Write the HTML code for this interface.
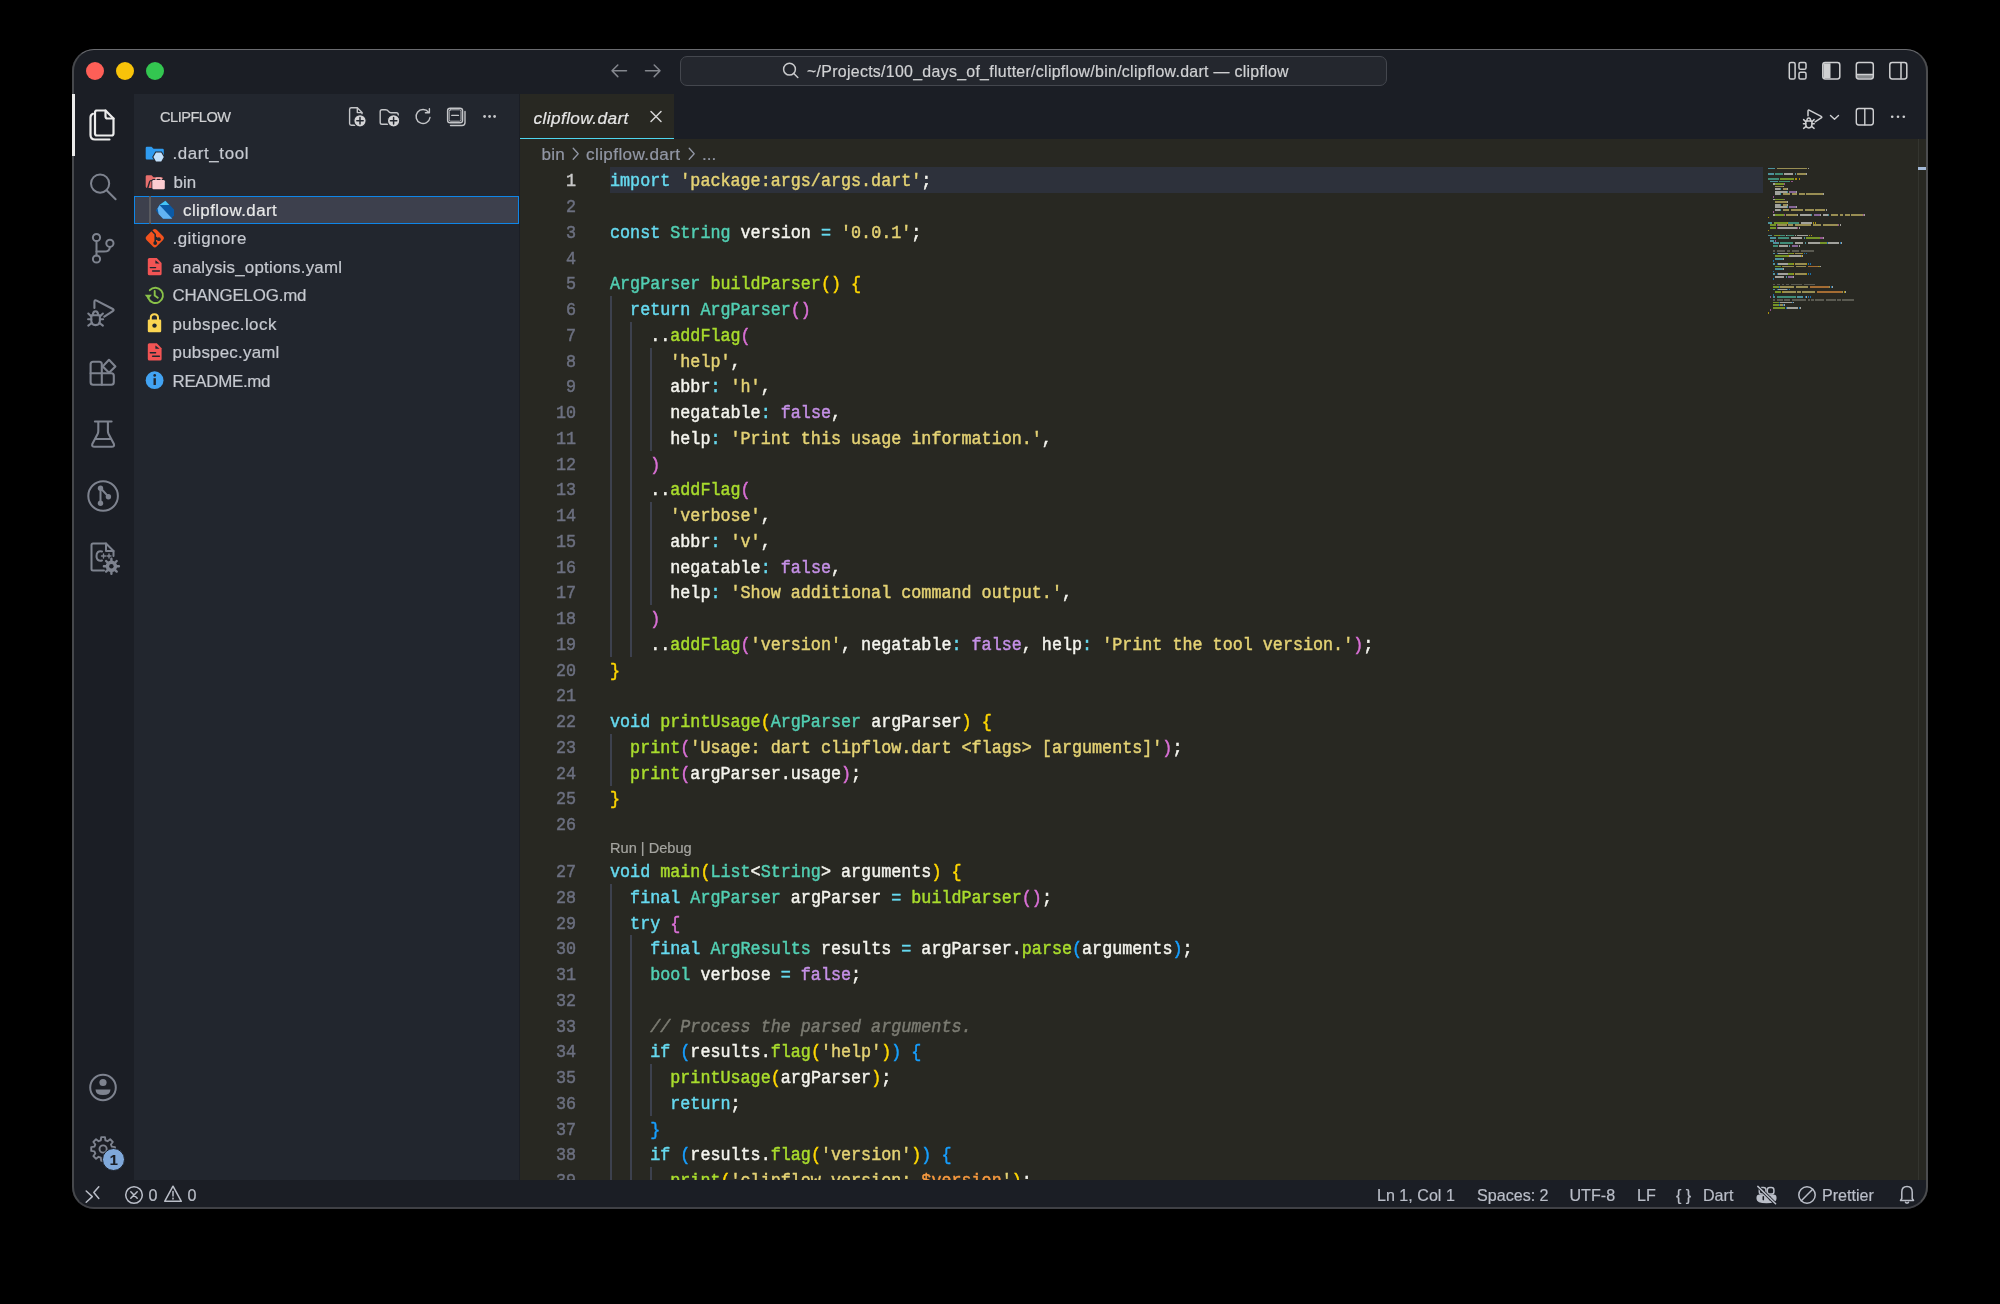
<!DOCTYPE html><html><head><meta charset="utf-8"><title>clipflow.dart</title><style>

html,body{margin:0;padding:0;background:#000;width:2000px;height:1304px;overflow:hidden}
.a{position:absolute}
#clip{position:absolute;left:0;top:0;width:2000px;height:1304px;clip-path:inset(49px 72px 95px 72px round 22px);will-change:transform}
.ui{font-family:"Liberation Sans",sans-serif;white-space:pre;-webkit-text-stroke:0.2px currentColor}
.mono{font-family:"Liberation Mono",monospace;white-space:pre}
.cl{position:absolute;left:610px;height:25.75px;line-height:25.75px;font-size:16.74px;transform:scaleY(1.09);transform-origin:0 -3.5px;-webkit-text-stroke:0.45px currentColor;font-family:"Liberation Mono",monospace;white-space:pre;color:#f4f4ee}
.ln{position:absolute;left:520px;width:56px;text-align:right;height:25.75px;line-height:25.75px;font-size:16.74px;transform:scaleY(1.09);transform-origin:0 -3.5px;-webkit-text-stroke:0.45px currentColor;font-family:"Liberation Mono",monospace;color:#6c7080}
.g{position:absolute;width:1.6px;background:#3d414e}
svg{position:absolute;overflow:visible}

.k{color:#66d9ef}
.t{color:#52cfb3}
.f{color:#a9dc2d}
.s{color:#e4d274}
.n{color:#c590e6}
.w{color:#f4f4ee}
.o{color:#66d9ef}
.b1{color:#ffd700}
.b2{color:#da70d6}
.b3{color:#179fff}
.c{color:#7b7b72}
.v{color:#f6993f}
.c{font-style:italic}
</style></head><body><div id="clip">
<div class="a" style="left:0;top:0;width:2000px;height:1304px;background:#1b1e25"></div>
<div class="a" style="left:134px;top:94px;width:385px;height:1086px;background:#22262e"></div>
<div class="a" style="left:520px;top:139px;width:1408px;height:1041px;background:#282822"></div>
<div class="a" style="left:520px;top:94px;width:154px;height:45px;background:#282822"></div>
<div class="a" style="left:520px;top:137.7px;width:154px;height:1.4px;background:#4fd6ee"></div>
<div class="a" style="left:609.5px;top:167.2px;width:1153px;height:25.8px;background:#2d313b"></div>
<div class="ln" style="top:167.30px;color:#c8c8c8">1</div>
<div class="cl" style="top:167.30px"><span class="k">import</span> <span class="s">&#x27;package:args/args.dart&#x27;</span><span class="w">;</span></div>
<div class="ln" style="top:193.05px;color:#6c7080">2</div>
<div class="ln" style="top:218.80px;color:#6c7080">3</div>
<div class="cl" style="top:218.80px"><span class="k">const</span> <span class="t">String</span> <span class="w">version</span> <span class="o">=</span> <span class="s">&#x27;0.0.1&#x27;</span><span class="w">;</span></div>
<div class="ln" style="top:244.55px;color:#6c7080">4</div>
<div class="ln" style="top:270.30px;color:#6c7080">5</div>
<div class="cl" style="top:270.30px"><span class="t">ArgParser</span> <span class="f">buildParser</span><span class="b1">()</span> <span class="b1">{</span></div>
<div class="ln" style="top:296.05px;color:#6c7080">6</div>
<div class="cl" style="top:296.05px">  <span class="k">return</span> <span class="t">ArgParser</span><span class="b2">()</span></div>
<div class="ln" style="top:321.80px;color:#6c7080">7</div>
<div class="cl" style="top:321.80px">    <span class="w">..</span><span class="f">addFlag</span><span class="b2">(</span></div>
<div class="ln" style="top:347.55px;color:#6c7080">8</div>
<div class="cl" style="top:347.55px">      <span class="s">&#x27;help&#x27;</span><span class="w">,</span></div>
<div class="ln" style="top:373.30px;color:#6c7080">9</div>
<div class="cl" style="top:373.30px">      <span class="w">abbr</span><span class="o">:</span> <span class="s">&#x27;h&#x27;</span><span class="w">,</span></div>
<div class="ln" style="top:399.05px;color:#6c7080">10</div>
<div class="cl" style="top:399.05px">      <span class="w">negatable</span><span class="o">:</span> <span class="n">false</span><span class="w">,</span></div>
<div class="ln" style="top:424.80px;color:#6c7080">11</div>
<div class="cl" style="top:424.80px">      <span class="w">help</span><span class="o">:</span> <span class="s">&#x27;Print this usage information.&#x27;</span><span class="w">,</span></div>
<div class="ln" style="top:450.55px;color:#6c7080">12</div>
<div class="cl" style="top:450.55px">    <span class="b2">)</span></div>
<div class="ln" style="top:476.30px;color:#6c7080">13</div>
<div class="cl" style="top:476.30px">    <span class="w">..</span><span class="f">addFlag</span><span class="b2">(</span></div>
<div class="ln" style="top:502.05px;color:#6c7080">14</div>
<div class="cl" style="top:502.05px">      <span class="s">&#x27;verbose&#x27;</span><span class="w">,</span></div>
<div class="ln" style="top:527.80px;color:#6c7080">15</div>
<div class="cl" style="top:527.80px">      <span class="w">abbr</span><span class="o">:</span> <span class="s">&#x27;v&#x27;</span><span class="w">,</span></div>
<div class="ln" style="top:553.55px;color:#6c7080">16</div>
<div class="cl" style="top:553.55px">      <span class="w">negatable</span><span class="o">:</span> <span class="n">false</span><span class="w">,</span></div>
<div class="ln" style="top:579.30px;color:#6c7080">17</div>
<div class="cl" style="top:579.30px">      <span class="w">help</span><span class="o">:</span> <span class="s">&#x27;Show additional command output.&#x27;</span><span class="w">,</span></div>
<div class="ln" style="top:605.05px;color:#6c7080">18</div>
<div class="cl" style="top:605.05px">    <span class="b2">)</span></div>
<div class="ln" style="top:630.80px;color:#6c7080">19</div>
<div class="cl" style="top:630.80px">    <span class="w">..</span><span class="f">addFlag</span><span class="b2">(</span><span class="s">&#x27;version&#x27;</span><span class="w">, negatable</span><span class="o">:</span> <span class="n">false</span><span class="w">, help</span><span class="o">:</span> <span class="s">&#x27;Print the tool version.&#x27;</span><span class="b2">)</span><span class="w">;</span></div>
<div class="ln" style="top:656.55px;color:#6c7080">20</div>
<div class="cl" style="top:656.55px"><span class="b1">}</span></div>
<div class="ln" style="top:682.30px;color:#6c7080">21</div>
<div class="ln" style="top:708.05px;color:#6c7080">22</div>
<div class="cl" style="top:708.05px"><span class="k">void</span> <span class="f">printUsage</span><span class="b1">(</span><span class="t">ArgParser</span> <span class="w">argParser</span><span class="b1">)</span> <span class="b1">{</span></div>
<div class="ln" style="top:733.80px;color:#6c7080">23</div>
<div class="cl" style="top:733.80px">  <span class="f">print</span><span class="b2">(</span><span class="s">&#x27;Usage: dart clipflow.dart &lt;flags&gt; [arguments]&#x27;</span><span class="b2">)</span><span class="w">;</span></div>
<div class="ln" style="top:759.55px;color:#6c7080">24</div>
<div class="cl" style="top:759.55px">  <span class="f">print</span><span class="b2">(</span><span class="w">argParser.usage</span><span class="b2">)</span><span class="w">;</span></div>
<div class="ln" style="top:785.30px;color:#6c7080">25</div>
<div class="cl" style="top:785.30px"><span class="b1">}</span></div>
<div class="ln" style="top:811.05px;color:#6c7080">26</div>
<div class="ln" style="top:858.10px;color:#6c7080">27</div>
<div class="cl" style="top:858.10px"><span class="k">void</span> <span class="f">main</span><span class="b1">(</span><span class="t">List</span><span class="w">&lt;</span><span class="t">String</span><span class="w">&gt;</span> <span class="w">arguments</span><span class="b1">)</span> <span class="b1">{</span></div>
<div class="ln" style="top:883.85px;color:#6c7080">28</div>
<div class="cl" style="top:883.85px">  <span class="k">final</span> <span class="t">ArgParser</span> <span class="w">argParser</span> <span class="o">=</span> <span class="f">buildParser</span><span class="b2">()</span><span class="w">;</span></div>
<div class="ln" style="top:909.60px;color:#6c7080">29</div>
<div class="cl" style="top:909.60px">  <span class="k">try</span> <span class="b2">{</span></div>
<div class="ln" style="top:935.35px;color:#6c7080">30</div>
<div class="cl" style="top:935.35px">    <span class="k">final</span> <span class="t">ArgResults</span> <span class="w">results</span> <span class="o">=</span> <span class="w">argParser.</span><span class="f">parse</span><span class="b3">(</span><span class="w">arguments</span><span class="b3">)</span><span class="w">;</span></div>
<div class="ln" style="top:961.10px;color:#6c7080">31</div>
<div class="cl" style="top:961.10px">    <span class="t">bool</span> <span class="w">verbose</span> <span class="o">=</span> <span class="n">false</span><span class="w">;</span></div>
<div class="ln" style="top:986.85px;color:#6c7080">32</div>
<div class="ln" style="top:1012.60px;color:#6c7080">33</div>
<div class="cl" style="top:1012.60px">    <span class="c">// Process the parsed arguments.</span></div>
<div class="ln" style="top:1038.35px;color:#6c7080">34</div>
<div class="cl" style="top:1038.35px">    <span class="k">if</span> <span class="b3">(</span><span class="w">results.</span><span class="f">flag</span><span class="b1">(</span><span class="s">&#x27;help&#x27;</span><span class="b1">)</span><span class="b3">)</span> <span class="b3">{</span></div>
<div class="ln" style="top:1064.10px;color:#6c7080">35</div>
<div class="cl" style="top:1064.10px">      <span class="f">printUsage</span><span class="b1">(</span><span class="w">argParser</span><span class="b1">)</span><span class="w">;</span></div>
<div class="ln" style="top:1089.85px;color:#6c7080">36</div>
<div class="cl" style="top:1089.85px">      <span class="k">return</span><span class="w">;</span></div>
<div class="ln" style="top:1115.60px;color:#6c7080">37</div>
<div class="cl" style="top:1115.60px">    <span class="b3">}</span></div>
<div class="ln" style="top:1141.35px;color:#6c7080">38</div>
<div class="cl" style="top:1141.35px">    <span class="k">if</span> <span class="b3">(</span><span class="w">results.</span><span class="f">flag</span><span class="b1">(</span><span class="s">&#x27;version&#x27;</span><span class="b1">)</span><span class="b3">)</span> <span class="b3">{</span></div>
<div class="ln" style="top:1167.10px;color:#6c7080">39</div>
<div class="cl" style="top:1167.10px">      <span class="f">print</span><span class="b1">(</span><span class="s">&#x27;clipflow version: </span><span class="v">$version</span><span class="s">&#x27;</span><span class="b1">)</span><span class="w">;</span></div>
<div class="g" style="left:610.00px;top:296.05px;height:26.05px"></div>
<div class="g" style="left:610.00px;top:321.80px;height:26.05px"></div>
<div class="g" style="left:630.09px;top:321.80px;height:26.05px"></div>
<div class="g" style="left:610.00px;top:347.55px;height:26.05px"></div>
<div class="g" style="left:630.09px;top:347.55px;height:26.05px"></div>
<div class="g" style="left:650.18px;top:347.55px;height:26.05px"></div>
<div class="g" style="left:610.00px;top:373.30px;height:26.05px"></div>
<div class="g" style="left:630.09px;top:373.30px;height:26.05px"></div>
<div class="g" style="left:650.18px;top:373.30px;height:26.05px"></div>
<div class="g" style="left:610.00px;top:399.05px;height:26.05px"></div>
<div class="g" style="left:630.09px;top:399.05px;height:26.05px"></div>
<div class="g" style="left:650.18px;top:399.05px;height:26.05px"></div>
<div class="g" style="left:610.00px;top:424.80px;height:26.05px"></div>
<div class="g" style="left:630.09px;top:424.80px;height:26.05px"></div>
<div class="g" style="left:650.18px;top:424.80px;height:26.05px"></div>
<div class="g" style="left:610.00px;top:450.55px;height:26.05px"></div>
<div class="g" style="left:630.09px;top:450.55px;height:26.05px"></div>
<div class="g" style="left:610.00px;top:476.30px;height:26.05px"></div>
<div class="g" style="left:630.09px;top:476.30px;height:26.05px"></div>
<div class="g" style="left:610.00px;top:502.05px;height:26.05px"></div>
<div class="g" style="left:630.09px;top:502.05px;height:26.05px"></div>
<div class="g" style="left:650.18px;top:502.05px;height:26.05px"></div>
<div class="g" style="left:610.00px;top:527.80px;height:26.05px"></div>
<div class="g" style="left:630.09px;top:527.80px;height:26.05px"></div>
<div class="g" style="left:650.18px;top:527.80px;height:26.05px"></div>
<div class="g" style="left:610.00px;top:553.55px;height:26.05px"></div>
<div class="g" style="left:630.09px;top:553.55px;height:26.05px"></div>
<div class="g" style="left:650.18px;top:553.55px;height:26.05px"></div>
<div class="g" style="left:610.00px;top:579.30px;height:26.05px"></div>
<div class="g" style="left:630.09px;top:579.30px;height:26.05px"></div>
<div class="g" style="left:650.18px;top:579.30px;height:26.05px"></div>
<div class="g" style="left:610.00px;top:605.05px;height:26.05px"></div>
<div class="g" style="left:630.09px;top:605.05px;height:26.05px"></div>
<div class="g" style="left:610.00px;top:630.80px;height:26.05px"></div>
<div class="g" style="left:630.09px;top:630.80px;height:26.05px"></div>
<div class="g" style="left:610.00px;top:733.80px;height:26.05px"></div>
<div class="g" style="left:610.00px;top:759.55px;height:26.05px"></div>
<div class="g" style="left:610.00px;top:883.85px;height:26.05px"></div>
<div class="g" style="left:610.00px;top:909.60px;height:26.05px"></div>
<div class="g" style="left:610.00px;top:935.35px;height:26.05px"></div>
<div class="g" style="left:630.09px;top:935.35px;height:26.05px"></div>
<div class="g" style="left:610.00px;top:961.10px;height:26.05px"></div>
<div class="g" style="left:630.09px;top:961.10px;height:26.05px"></div>
<div class="g" style="left:610.00px;top:986.85px;height:26.05px"></div>
<div class="g" style="left:630.09px;top:986.85px;height:26.05px"></div>
<div class="g" style="left:610.00px;top:1012.60px;height:26.05px"></div>
<div class="g" style="left:630.09px;top:1012.60px;height:26.05px"></div>
<div class="g" style="left:610.00px;top:1038.35px;height:26.05px"></div>
<div class="g" style="left:630.09px;top:1038.35px;height:26.05px"></div>
<div class="g" style="left:610.00px;top:1064.10px;height:26.05px"></div>
<div class="g" style="left:630.09px;top:1064.10px;height:26.05px"></div>
<div class="g" style="left:650.18px;top:1064.10px;height:26.05px"></div>
<div class="g" style="left:610.00px;top:1089.85px;height:26.05px"></div>
<div class="g" style="left:630.09px;top:1089.85px;height:26.05px"></div>
<div class="g" style="left:650.18px;top:1089.85px;height:26.05px"></div>
<div class="g" style="left:610.00px;top:1115.60px;height:26.05px"></div>
<div class="g" style="left:630.09px;top:1115.60px;height:26.05px"></div>
<div class="g" style="left:610.00px;top:1141.35px;height:26.05px"></div>
<div class="g" style="left:630.09px;top:1141.35px;height:26.05px"></div>
<div class="g" style="left:610.00px;top:1167.10px;height:26.05px"></div>
<div class="g" style="left:630.09px;top:1167.10px;height:26.05px"></div>
<div class="g" style="left:650.18px;top:1167.10px;height:26.05px"></div>
<div class="a ui" style="left:610px;top:837.80px;height:21.3px;line-height:21.3px;font-size:14.6px;color:#a5a5a0">Run | Debug</div>
<div class="a" style="left:1917.6px;top:139px;width:1.1px;height:1041px;background:#34352f"></div>
<div class="a" style="left:1917.9px;top:167.1px;width:10px;height:3px;background:#a3b9d6"></div>
<div class="a" style="left:1767.60px;top:167.70px;width:7.43px;height:1.75px;background:#66d9ef;opacity:.6"></div>
<div class="a" style="left:1776.61px;top:167.70px;width:30.60px;height:1.75px;background:#e4d274;opacity:.6"></div>
<div class="a" style="left:1807.51px;top:167.70px;width:0.99px;height:1.75px;background:#f4f4ee;opacity:.6"></div>
<div class="a" style="left:1767.60px;top:172.85px;width:6.14px;height:1.75px;background:#66d9ef;opacity:.6"></div>
<div class="a" style="left:1775.32px;top:172.85px;width:7.43px;height:1.75px;background:#52cfb3;opacity:.6"></div>
<div class="a" style="left:1784.34px;top:172.85px;width:8.71px;height:1.75px;background:#f4f4ee;opacity:.6"></div>
<div class="a" style="left:1794.64px;top:172.85px;width:0.99px;height:1.75px;background:#66d9ef;opacity:.6"></div>
<div class="a" style="left:1797.21px;top:172.85px;width:8.71px;height:1.75px;background:#e4d274;opacity:.6"></div>
<div class="a" style="left:1806.22px;top:172.85px;width:0.99px;height:1.75px;background:#f4f4ee;opacity:.6"></div>
<div class="a" style="left:1767.60px;top:178.00px;width:11.29px;height:1.75px;background:#52cfb3;opacity:.6"></div>
<div class="a" style="left:1780.47px;top:178.00px;width:13.86px;height:1.75px;background:#a9dc2d;opacity:.6"></div>
<div class="a" style="left:1794.64px;top:178.00px;width:2.28px;height:1.75px;background:#ffd700;opacity:.6"></div>
<div class="a" style="left:1798.50px;top:178.00px;width:0.99px;height:1.75px;background:#ffd700;opacity:.6"></div>
<div class="a" style="left:1770.17px;top:180.57px;width:7.43px;height:1.75px;background:#66d9ef;opacity:.6"></div>
<div class="a" style="left:1779.19px;top:180.57px;width:11.29px;height:1.75px;background:#52cfb3;opacity:.6"></div>
<div class="a" style="left:1790.77px;top:180.57px;width:2.28px;height:1.75px;background:#da70d6;opacity:.6"></div>
<div class="a" style="left:1772.75px;top:183.15px;width:2.28px;height:1.75px;background:#f4f4ee;opacity:.6"></div>
<div class="a" style="left:1775.32px;top:183.15px;width:8.71px;height:1.75px;background:#a9dc2d;opacity:.6"></div>
<div class="a" style="left:1784.34px;top:183.15px;width:0.99px;height:1.75px;background:#da70d6;opacity:.6"></div>
<div class="a" style="left:1775.32px;top:185.72px;width:7.43px;height:1.75px;background:#e4d274;opacity:.6"></div>
<div class="a" style="left:1783.05px;top:185.72px;width:0.99px;height:1.75px;background:#f4f4ee;opacity:.6"></div>
<div class="a" style="left:1775.32px;top:188.30px;width:4.85px;height:1.75px;background:#f4f4ee;opacity:.6"></div>
<div class="a" style="left:1780.47px;top:188.30px;width:0.99px;height:1.75px;background:#66d9ef;opacity:.6"></div>
<div class="a" style="left:1783.05px;top:188.30px;width:3.56px;height:1.75px;background:#e4d274;opacity:.6"></div>
<div class="a" style="left:1786.91px;top:188.30px;width:0.99px;height:1.75px;background:#f4f4ee;opacity:.6"></div>
<div class="a" style="left:1775.32px;top:190.88px;width:11.29px;height:1.75px;background:#f4f4ee;opacity:.6"></div>
<div class="a" style="left:1786.91px;top:190.88px;width:0.99px;height:1.75px;background:#66d9ef;opacity:.6"></div>
<div class="a" style="left:1789.49px;top:190.88px;width:6.14px;height:1.75px;background:#c590e6;opacity:.6"></div>
<div class="a" style="left:1795.92px;top:190.88px;width:0.99px;height:1.75px;background:#f4f4ee;opacity:.6"></div>
<div class="a" style="left:1775.32px;top:193.45px;width:4.85px;height:1.75px;background:#f4f4ee;opacity:.6"></div>
<div class="a" style="left:1780.47px;top:193.45px;width:0.99px;height:1.75px;background:#66d9ef;opacity:.6"></div>
<div class="a" style="left:1783.05px;top:193.45px;width:7.43px;height:1.75px;background:#e4d274;opacity:.6"></div>
<div class="a" style="left:1792.06px;top:193.45px;width:4.85px;height:1.75px;background:#e4d274;opacity:.6"></div>
<div class="a" style="left:1798.50px;top:193.45px;width:6.14px;height:1.75px;background:#e4d274;opacity:.6"></div>
<div class="a" style="left:1806.22px;top:193.45px;width:16.44px;height:1.75px;background:#e4d274;opacity:.6"></div>
<div class="a" style="left:1822.96px;top:193.45px;width:0.99px;height:1.75px;background:#f4f4ee;opacity:.6"></div>
<div class="a" style="left:1772.75px;top:196.03px;width:0.99px;height:1.75px;background:#da70d6;opacity:.6"></div>
<div class="a" style="left:1772.75px;top:198.60px;width:2.28px;height:1.75px;background:#f4f4ee;opacity:.6"></div>
<div class="a" style="left:1775.32px;top:198.60px;width:8.71px;height:1.75px;background:#a9dc2d;opacity:.6"></div>
<div class="a" style="left:1784.34px;top:198.60px;width:0.99px;height:1.75px;background:#da70d6;opacity:.6"></div>
<div class="a" style="left:1775.32px;top:201.17px;width:11.29px;height:1.75px;background:#e4d274;opacity:.6"></div>
<div class="a" style="left:1786.91px;top:201.17px;width:0.99px;height:1.75px;background:#f4f4ee;opacity:.6"></div>
<div class="a" style="left:1775.32px;top:203.75px;width:4.85px;height:1.75px;background:#f4f4ee;opacity:.6"></div>
<div class="a" style="left:1780.47px;top:203.75px;width:0.99px;height:1.75px;background:#66d9ef;opacity:.6"></div>
<div class="a" style="left:1783.05px;top:203.75px;width:3.56px;height:1.75px;background:#e4d274;opacity:.6"></div>
<div class="a" style="left:1786.91px;top:203.75px;width:0.99px;height:1.75px;background:#f4f4ee;opacity:.6"></div>
<div class="a" style="left:1775.32px;top:206.32px;width:11.29px;height:1.75px;background:#f4f4ee;opacity:.6"></div>
<div class="a" style="left:1786.91px;top:206.32px;width:0.99px;height:1.75px;background:#66d9ef;opacity:.6"></div>
<div class="a" style="left:1789.49px;top:206.32px;width:6.14px;height:1.75px;background:#c590e6;opacity:.6"></div>
<div class="a" style="left:1795.92px;top:206.32px;width:0.99px;height:1.75px;background:#f4f4ee;opacity:.6"></div>
<div class="a" style="left:1775.32px;top:208.90px;width:4.85px;height:1.75px;background:#f4f4ee;opacity:.6"></div>
<div class="a" style="left:1780.47px;top:208.90px;width:0.99px;height:1.75px;background:#66d9ef;opacity:.6"></div>
<div class="a" style="left:1783.05px;top:208.90px;width:6.14px;height:1.75px;background:#e4d274;opacity:.6"></div>
<div class="a" style="left:1790.77px;top:208.90px;width:12.57px;height:1.75px;background:#e4d274;opacity:.6"></div>
<div class="a" style="left:1804.94px;top:208.90px;width:8.71px;height:1.75px;background:#e4d274;opacity:.6"></div>
<div class="a" style="left:1815.24px;top:208.90px;width:10.00px;height:1.75px;background:#e4d274;opacity:.6"></div>
<div class="a" style="left:1825.54px;top:208.90px;width:0.99px;height:1.75px;background:#f4f4ee;opacity:.6"></div>
<div class="a" style="left:1772.75px;top:211.47px;width:0.99px;height:1.75px;background:#da70d6;opacity:.6"></div>
<div class="a" style="left:1772.75px;top:214.05px;width:2.28px;height:1.75px;background:#f4f4ee;opacity:.6"></div>
<div class="a" style="left:1775.32px;top:214.05px;width:8.71px;height:1.75px;background:#a9dc2d;opacity:.6"></div>
<div class="a" style="left:1784.34px;top:214.05px;width:0.99px;height:1.75px;background:#da70d6;opacity:.6"></div>
<div class="a" style="left:1785.62px;top:214.05px;width:11.29px;height:1.75px;background:#e4d274;opacity:.6"></div>
<div class="a" style="left:1797.21px;top:214.05px;width:0.99px;height:1.75px;background:#f4f4ee;opacity:.6"></div>
<div class="a" style="left:1799.79px;top:214.05px;width:11.29px;height:1.75px;background:#f4f4ee;opacity:.6"></div>
<div class="a" style="left:1811.38px;top:214.05px;width:0.99px;height:1.75px;background:#66d9ef;opacity:.6"></div>
<div class="a" style="left:1813.95px;top:214.05px;width:6.14px;height:1.75px;background:#c590e6;opacity:.6"></div>
<div class="a" style="left:1820.39px;top:214.05px;width:0.99px;height:1.75px;background:#f4f4ee;opacity:.6"></div>
<div class="a" style="left:1822.96px;top:214.05px;width:4.85px;height:1.75px;background:#f4f4ee;opacity:.6"></div>
<div class="a" style="left:1828.11px;top:214.05px;width:0.99px;height:1.75px;background:#66d9ef;opacity:.6"></div>
<div class="a" style="left:1830.69px;top:214.05px;width:7.43px;height:1.75px;background:#e4d274;opacity:.6"></div>
<div class="a" style="left:1839.70px;top:214.05px;width:3.56px;height:1.75px;background:#e4d274;opacity:.6"></div>
<div class="a" style="left:1844.85px;top:214.05px;width:4.85px;height:1.75px;background:#e4d274;opacity:.6"></div>
<div class="a" style="left:1851.29px;top:214.05px;width:11.29px;height:1.75px;background:#e4d274;opacity:.6"></div>
<div class="a" style="left:1862.88px;top:214.05px;width:0.99px;height:1.75px;background:#da70d6;opacity:.6"></div>
<div class="a" style="left:1864.16px;top:214.05px;width:0.99px;height:1.75px;background:#f4f4ee;opacity:.6"></div>
<div class="a" style="left:1767.60px;top:216.62px;width:0.99px;height:1.75px;background:#ffd700;opacity:.6"></div>
<div class="a" style="left:1767.60px;top:221.78px;width:4.85px;height:1.75px;background:#66d9ef;opacity:.6"></div>
<div class="a" style="left:1774.04px;top:221.78px;width:12.57px;height:1.75px;background:#a9dc2d;opacity:.6"></div>
<div class="a" style="left:1786.91px;top:221.78px;width:0.99px;height:1.75px;background:#ffd700;opacity:.6"></div>
<div class="a" style="left:1788.20px;top:221.78px;width:11.29px;height:1.75px;background:#52cfb3;opacity:.6"></div>
<div class="a" style="left:1801.07px;top:221.78px;width:11.29px;height:1.75px;background:#f4f4ee;opacity:.6"></div>
<div class="a" style="left:1812.66px;top:221.78px;width:0.99px;height:1.75px;background:#ffd700;opacity:.6"></div>
<div class="a" style="left:1815.24px;top:221.78px;width:0.99px;height:1.75px;background:#ffd700;opacity:.6"></div>
<div class="a" style="left:1770.17px;top:224.35px;width:6.14px;height:1.75px;background:#a9dc2d;opacity:.6"></div>
<div class="a" style="left:1776.61px;top:224.35px;width:0.99px;height:1.75px;background:#da70d6;opacity:.6"></div>
<div class="a" style="left:1777.90px;top:224.35px;width:8.71px;height:1.75px;background:#e4d274;opacity:.6"></div>
<div class="a" style="left:1788.20px;top:224.35px;width:4.85px;height:1.75px;background:#e4d274;opacity:.6"></div>
<div class="a" style="left:1794.64px;top:224.35px;width:16.44px;height:1.75px;background:#e4d274;opacity:.6"></div>
<div class="a" style="left:1812.66px;top:224.35px;width:8.71px;height:1.75px;background:#e4d274;opacity:.6"></div>
<div class="a" style="left:1822.96px;top:224.35px;width:15.15px;height:1.75px;background:#e4d274;opacity:.6"></div>
<div class="a" style="left:1838.41px;top:224.35px;width:0.99px;height:1.75px;background:#da70d6;opacity:.6"></div>
<div class="a" style="left:1839.70px;top:224.35px;width:0.99px;height:1.75px;background:#f4f4ee;opacity:.6"></div>
<div class="a" style="left:1770.17px;top:226.92px;width:6.14px;height:1.75px;background:#a9dc2d;opacity:.6"></div>
<div class="a" style="left:1776.61px;top:226.92px;width:0.99px;height:1.75px;background:#da70d6;opacity:.6"></div>
<div class="a" style="left:1777.90px;top:226.92px;width:19.01px;height:1.75px;background:#f4f4ee;opacity:.6"></div>
<div class="a" style="left:1797.21px;top:226.92px;width:0.99px;height:1.75px;background:#da70d6;opacity:.6"></div>
<div class="a" style="left:1798.50px;top:226.92px;width:0.99px;height:1.75px;background:#f4f4ee;opacity:.6"></div>
<div class="a" style="left:1767.60px;top:229.50px;width:0.99px;height:1.75px;background:#ffd700;opacity:.6"></div>
<div class="a" style="left:1767.60px;top:234.65px;width:4.85px;height:1.75px;background:#66d9ef;opacity:.6"></div>
<div class="a" style="left:1774.04px;top:234.65px;width:4.85px;height:1.75px;background:#a9dc2d;opacity:.6"></div>
<div class="a" style="left:1779.19px;top:234.65px;width:0.99px;height:1.75px;background:#ffd700;opacity:.6"></div>
<div class="a" style="left:1780.47px;top:234.65px;width:4.85px;height:1.75px;background:#52cfb3;opacity:.6"></div>
<div class="a" style="left:1785.62px;top:234.65px;width:0.99px;height:1.75px;background:#f4f4ee;opacity:.6"></div>
<div class="a" style="left:1786.91px;top:234.65px;width:7.43px;height:1.75px;background:#52cfb3;opacity:.6"></div>
<div class="a" style="left:1794.64px;top:234.65px;width:0.99px;height:1.75px;background:#f4f4ee;opacity:.6"></div>
<div class="a" style="left:1797.21px;top:234.65px;width:11.29px;height:1.75px;background:#f4f4ee;opacity:.6"></div>
<div class="a" style="left:1808.80px;top:234.65px;width:0.99px;height:1.75px;background:#ffd700;opacity:.6"></div>
<div class="a" style="left:1811.38px;top:234.65px;width:0.99px;height:1.75px;background:#ffd700;opacity:.6"></div>
<div class="a" style="left:1770.17px;top:237.22px;width:6.14px;height:1.75px;background:#66d9ef;opacity:.6"></div>
<div class="a" style="left:1777.90px;top:237.22px;width:11.29px;height:1.75px;background:#52cfb3;opacity:.6"></div>
<div class="a" style="left:1790.77px;top:237.22px;width:11.29px;height:1.75px;background:#f4f4ee;opacity:.6"></div>
<div class="a" style="left:1803.65px;top:237.22px;width:0.99px;height:1.75px;background:#66d9ef;opacity:.6"></div>
<div class="a" style="left:1806.22px;top:237.22px;width:13.86px;height:1.75px;background:#a9dc2d;opacity:.6"></div>
<div class="a" style="left:1820.39px;top:237.22px;width:2.28px;height:1.75px;background:#da70d6;opacity:.6"></div>
<div class="a" style="left:1822.96px;top:237.22px;width:0.99px;height:1.75px;background:#f4f4ee;opacity:.6"></div>
<div class="a" style="left:1770.17px;top:239.80px;width:3.56px;height:1.75px;background:#66d9ef;opacity:.6"></div>
<div class="a" style="left:1775.32px;top:239.80px;width:0.99px;height:1.75px;background:#da70d6;opacity:.6"></div>
<div class="a" style="left:1772.75px;top:242.38px;width:6.14px;height:1.75px;background:#66d9ef;opacity:.6"></div>
<div class="a" style="left:1780.47px;top:242.38px;width:12.57px;height:1.75px;background:#52cfb3;opacity:.6"></div>
<div class="a" style="left:1794.64px;top:242.38px;width:8.71px;height:1.75px;background:#f4f4ee;opacity:.6"></div>
<div class="a" style="left:1804.94px;top:242.38px;width:0.99px;height:1.75px;background:#66d9ef;opacity:.6"></div>
<div class="a" style="left:1807.51px;top:242.38px;width:12.57px;height:1.75px;background:#f4f4ee;opacity:.6"></div>
<div class="a" style="left:1820.39px;top:242.38px;width:6.14px;height:1.75px;background:#a9dc2d;opacity:.6"></div>
<div class="a" style="left:1826.82px;top:242.38px;width:0.99px;height:1.75px;background:#179fff;opacity:.6"></div>
<div class="a" style="left:1828.11px;top:242.38px;width:11.29px;height:1.75px;background:#f4f4ee;opacity:.6"></div>
<div class="a" style="left:1839.70px;top:242.38px;width:0.99px;height:1.75px;background:#179fff;opacity:.6"></div>
<div class="a" style="left:1840.99px;top:242.38px;width:0.99px;height:1.75px;background:#f4f4ee;opacity:.6"></div>
<div class="a" style="left:1772.75px;top:244.95px;width:4.85px;height:1.75px;background:#52cfb3;opacity:.6"></div>
<div class="a" style="left:1779.19px;top:244.95px;width:8.71px;height:1.75px;background:#f4f4ee;opacity:.6"></div>
<div class="a" style="left:1789.49px;top:244.95px;width:0.99px;height:1.75px;background:#66d9ef;opacity:.6"></div>
<div class="a" style="left:1792.06px;top:244.95px;width:6.14px;height:1.75px;background:#c590e6;opacity:.6"></div>
<div class="a" style="left:1798.50px;top:244.95px;width:0.99px;height:1.75px;background:#f4f4ee;opacity:.6"></div>
<div class="a" style="left:1772.75px;top:250.10px;width:2.28px;height:1.75px;background:#7b7b72;opacity:.6"></div>
<div class="a" style="left:1776.61px;top:250.10px;width:8.71px;height:1.75px;background:#7b7b72;opacity:.6"></div>
<div class="a" style="left:1786.91px;top:250.10px;width:3.56px;height:1.75px;background:#7b7b72;opacity:.6"></div>
<div class="a" style="left:1792.06px;top:250.10px;width:7.43px;height:1.75px;background:#7b7b72;opacity:.6"></div>
<div class="a" style="left:1801.07px;top:250.10px;width:12.57px;height:1.75px;background:#7b7b72;opacity:.6"></div>
<div class="a" style="left:1772.75px;top:252.67px;width:2.28px;height:1.75px;background:#66d9ef;opacity:.6"></div>
<div class="a" style="left:1776.61px;top:252.67px;width:0.99px;height:1.75px;background:#179fff;opacity:.6"></div>
<div class="a" style="left:1777.90px;top:252.67px;width:10.00px;height:1.75px;background:#f4f4ee;opacity:.6"></div>
<div class="a" style="left:1788.20px;top:252.67px;width:4.85px;height:1.75px;background:#a9dc2d;opacity:.6"></div>
<div class="a" style="left:1793.35px;top:252.67px;width:0.99px;height:1.75px;background:#ffd700;opacity:.6"></div>
<div class="a" style="left:1794.64px;top:252.67px;width:7.43px;height:1.75px;background:#e4d274;opacity:.6"></div>
<div class="a" style="left:1802.36px;top:252.67px;width:0.99px;height:1.75px;background:#ffd700;opacity:.6"></div>
<div class="a" style="left:1803.65px;top:252.67px;width:0.99px;height:1.75px;background:#179fff;opacity:.6"></div>
<div class="a" style="left:1806.22px;top:252.67px;width:0.99px;height:1.75px;background:#179fff;opacity:.6"></div>
<div class="a" style="left:1775.32px;top:255.25px;width:12.57px;height:1.75px;background:#a9dc2d;opacity:.6"></div>
<div class="a" style="left:1788.20px;top:255.25px;width:0.99px;height:1.75px;background:#ffd700;opacity:.6"></div>
<div class="a" style="left:1789.49px;top:255.25px;width:11.29px;height:1.75px;background:#f4f4ee;opacity:.6"></div>
<div class="a" style="left:1801.07px;top:255.25px;width:0.99px;height:1.75px;background:#ffd700;opacity:.6"></div>
<div class="a" style="left:1802.36px;top:255.25px;width:0.99px;height:1.75px;background:#f4f4ee;opacity:.6"></div>
<div class="a" style="left:1775.32px;top:257.83px;width:7.43px;height:1.75px;background:#66d9ef;opacity:.6"></div>
<div class="a" style="left:1783.05px;top:257.83px;width:0.99px;height:1.75px;background:#f4f4ee;opacity:.6"></div>
<div class="a" style="left:1772.75px;top:260.40px;width:0.99px;height:1.75px;background:#179fff;opacity:.6"></div>
<div class="a" style="left:1772.75px;top:262.98px;width:2.28px;height:1.75px;background:#66d9ef;opacity:.6"></div>
<div class="a" style="left:1776.61px;top:262.98px;width:0.99px;height:1.75px;background:#179fff;opacity:.6"></div>
<div class="a" style="left:1777.90px;top:262.98px;width:10.00px;height:1.75px;background:#f4f4ee;opacity:.6"></div>
<div class="a" style="left:1788.20px;top:262.98px;width:4.85px;height:1.75px;background:#a9dc2d;opacity:.6"></div>
<div class="a" style="left:1793.35px;top:262.98px;width:0.99px;height:1.75px;background:#ffd700;opacity:.6"></div>
<div class="a" style="left:1794.64px;top:262.98px;width:11.29px;height:1.75px;background:#e4d274;opacity:.6"></div>
<div class="a" style="left:1806.22px;top:262.98px;width:0.99px;height:1.75px;background:#ffd700;opacity:.6"></div>
<div class="a" style="left:1807.51px;top:262.98px;width:0.99px;height:1.75px;background:#179fff;opacity:.6"></div>
<div class="a" style="left:1810.09px;top:262.98px;width:0.99px;height:1.75px;background:#179fff;opacity:.6"></div>
<div class="a" style="left:1775.32px;top:265.55px;width:6.14px;height:1.75px;background:#a9dc2d;opacity:.6"></div>
<div class="a" style="left:1781.76px;top:265.55px;width:0.99px;height:1.75px;background:#ffd700;opacity:.6"></div>
<div class="a" style="left:1783.05px;top:265.55px;width:11.29px;height:1.75px;background:#e4d274;opacity:.6"></div>
<div class="a" style="left:1795.92px;top:265.55px;width:10.00px;height:1.75px;background:#e4d274;opacity:.6"></div>
<div class="a" style="left:1807.51px;top:265.55px;width:10.00px;height:1.75px;background:#f6993f;opacity:.6"></div>
<div class="a" style="left:1817.81px;top:265.55px;width:0.99px;height:1.75px;background:#e4d274;opacity:.6"></div>
<div class="a" style="left:1819.10px;top:265.55px;width:0.99px;height:1.75px;background:#ffd700;opacity:.6"></div>
<div class="a" style="left:1820.39px;top:265.55px;width:0.99px;height:1.75px;background:#f4f4ee;opacity:.6"></div>
<div class="a" style="left:1775.32px;top:268.12px;width:7.43px;height:1.75px;background:#66d9ef;opacity:.6"></div>
<div class="a" style="left:1783.05px;top:268.12px;width:0.99px;height:1.75px;background:#f4f4ee;opacity:.6"></div>
<div class="a" style="left:1772.75px;top:270.70px;width:0.99px;height:1.75px;background:#179fff;opacity:.6"></div>
<div class="a" style="left:1772.75px;top:273.28px;width:2.28px;height:1.75px;background:#66d9ef;opacity:.6"></div>
<div class="a" style="left:1776.61px;top:273.28px;width:0.99px;height:1.75px;background:#179fff;opacity:.6"></div>
<div class="a" style="left:1777.90px;top:273.28px;width:10.00px;height:1.75px;background:#f4f4ee;opacity:.6"></div>
<div class="a" style="left:1788.20px;top:273.28px;width:4.85px;height:1.75px;background:#a9dc2d;opacity:.6"></div>
<div class="a" style="left:1793.35px;top:273.28px;width:0.99px;height:1.75px;background:#ffd700;opacity:.6"></div>
<div class="a" style="left:1794.64px;top:273.28px;width:11.29px;height:1.75px;background:#e4d274;opacity:.6"></div>
<div class="a" style="left:1806.22px;top:273.28px;width:0.99px;height:1.75px;background:#ffd700;opacity:.6"></div>
<div class="a" style="left:1807.51px;top:273.28px;width:0.99px;height:1.75px;background:#179fff;opacity:.6"></div>
<div class="a" style="left:1810.09px;top:273.28px;width:0.99px;height:1.75px;background:#179fff;opacity:.6"></div>
<div class="a" style="left:1775.32px;top:275.85px;width:8.71px;height:1.75px;background:#f4f4ee;opacity:.6"></div>
<div class="a" style="left:1785.62px;top:275.85px;width:0.99px;height:1.75px;background:#66d9ef;opacity:.6"></div>
<div class="a" style="left:1788.20px;top:275.85px;width:4.85px;height:1.75px;background:#c590e6;opacity:.6"></div>
<div class="a" style="left:1793.35px;top:275.85px;width:0.99px;height:1.75px;background:#f4f4ee;opacity:.6"></div>
<div class="a" style="left:1772.75px;top:278.43px;width:0.99px;height:1.75px;background:#179fff;opacity:.6"></div>
<div class="a" style="left:1772.75px;top:283.58px;width:2.28px;height:1.75px;background:#7b7b72;opacity:.6"></div>
<div class="a" style="left:1776.61px;top:283.58px;width:3.56px;height:1.75px;background:#7b7b72;opacity:.6"></div>
<div class="a" style="left:1781.76px;top:283.58px;width:2.28px;height:1.75px;background:#7b7b72;opacity:.6"></div>
<div class="a" style="left:1785.62px;top:283.58px;width:3.56px;height:1.75px;background:#7b7b72;opacity:.6"></div>
<div class="a" style="left:1790.77px;top:283.58px;width:11.29px;height:1.75px;background:#7b7b72;opacity:.6"></div>
<div class="a" style="left:1803.65px;top:283.58px;width:11.29px;height:1.75px;background:#7b7b72;opacity:.6"></div>
<div class="a" style="left:1772.75px;top:286.15px;width:6.14px;height:1.75px;background:#a9dc2d;opacity:.6"></div>
<div class="a" style="left:1779.19px;top:286.15px;width:0.99px;height:1.75px;background:#179fff;opacity:.6"></div>
<div class="a" style="left:1780.47px;top:286.15px;width:13.86px;height:1.75px;background:#e4d274;opacity:.6"></div>
<div class="a" style="left:1795.92px;top:286.15px;width:12.57px;height:1.75px;background:#e4d274;opacity:.6"></div>
<div class="a" style="left:1810.09px;top:286.15px;width:19.01px;height:1.75px;background:#f6993f;opacity:.6"></div>
<div class="a" style="left:1829.40px;top:286.15px;width:0.99px;height:1.75px;background:#e4d274;opacity:.6"></div>
<div class="a" style="left:1830.69px;top:286.15px;width:0.99px;height:1.75px;background:#179fff;opacity:.6"></div>
<div class="a" style="left:1831.97px;top:286.15px;width:0.99px;height:1.75px;background:#f4f4ee;opacity:.6"></div>
<div class="a" style="left:1772.75px;top:288.73px;width:2.28px;height:1.75px;background:#66d9ef;opacity:.6"></div>
<div class="a" style="left:1776.61px;top:288.73px;width:0.99px;height:1.75px;background:#179fff;opacity:.6"></div>
<div class="a" style="left:1777.90px;top:288.73px;width:8.71px;height:1.75px;background:#f4f4ee;opacity:.6"></div>
<div class="a" style="left:1786.91px;top:288.73px;width:0.99px;height:1.75px;background:#179fff;opacity:.6"></div>
<div class="a" style="left:1789.49px;top:288.73px;width:0.99px;height:1.75px;background:#179fff;opacity:.6"></div>
<div class="a" style="left:1775.32px;top:291.30px;width:6.14px;height:1.75px;background:#a9dc2d;opacity:.6"></div>
<div class="a" style="left:1781.76px;top:291.30px;width:0.99px;height:1.75px;background:#ffd700;opacity:.6"></div>
<div class="a" style="left:1783.05px;top:291.30px;width:12.57px;height:1.75px;background:#e4d274;opacity:.6"></div>
<div class="a" style="left:1797.21px;top:291.30px;width:3.56px;height:1.75px;background:#e4d274;opacity:.6"></div>
<div class="a" style="left:1802.36px;top:291.30px;width:12.57px;height:1.75px;background:#e4d274;opacity:.6"></div>
<div class="a" style="left:1816.52px;top:291.30px;width:25.45px;height:1.75px;background:#f6993f;opacity:.6"></div>
<div class="a" style="left:1842.27px;top:291.30px;width:0.99px;height:1.75px;background:#e4d274;opacity:.6"></div>
<div class="a" style="left:1843.56px;top:291.30px;width:0.99px;height:1.75px;background:#ffd700;opacity:.6"></div>
<div class="a" style="left:1844.85px;top:291.30px;width:0.99px;height:1.75px;background:#f4f4ee;opacity:.6"></div>
<div class="a" style="left:1772.75px;top:293.88px;width:0.99px;height:1.75px;background:#179fff;opacity:.6"></div>
<div class="a" style="left:1770.17px;top:296.45px;width:0.99px;height:1.75px;background:#da70d6;opacity:.6"></div>
<div class="a" style="left:1772.75px;top:296.45px;width:2.28px;height:1.75px;background:#66d9ef;opacity:.6"></div>
<div class="a" style="left:1776.61px;top:296.45px;width:19.01px;height:1.75px;background:#52cfb3;opacity:.6"></div>
<div class="a" style="left:1797.21px;top:296.45px;width:6.14px;height:1.75px;background:#66d9ef;opacity:.6"></div>
<div class="a" style="left:1804.94px;top:296.45px;width:0.99px;height:1.75px;background:#179fff;opacity:.6"></div>
<div class="a" style="left:1806.22px;top:296.45px;width:0.99px;height:1.75px;background:#f4f4ee;opacity:.6"></div>
<div class="a" style="left:1807.51px;top:296.45px;width:0.99px;height:1.75px;background:#179fff;opacity:.6"></div>
<div class="a" style="left:1810.09px;top:296.45px;width:0.99px;height:1.75px;background:#179fff;opacity:.6"></div>
<div class="a" style="left:1772.75px;top:299.03px;width:2.28px;height:1.75px;background:#7b7b72;opacity:.6"></div>
<div class="a" style="left:1776.61px;top:299.03px;width:6.14px;height:1.75px;background:#7b7b72;opacity:.6"></div>
<div class="a" style="left:1784.34px;top:299.03px;width:6.14px;height:1.75px;background:#7b7b72;opacity:.6"></div>
<div class="a" style="left:1792.06px;top:299.03px;width:13.86px;height:1.75px;background:#7b7b72;opacity:.6"></div>
<div class="a" style="left:1807.51px;top:299.03px;width:2.28px;height:1.75px;background:#7b7b72;opacity:.6"></div>
<div class="a" style="left:1811.38px;top:299.03px;width:2.28px;height:1.75px;background:#7b7b72;opacity:.6"></div>
<div class="a" style="left:1815.24px;top:299.03px;width:8.71px;height:1.75px;background:#7b7b72;opacity:.6"></div>
<div class="a" style="left:1825.54px;top:299.03px;width:10.00px;height:1.75px;background:#7b7b72;opacity:.6"></div>
<div class="a" style="left:1837.12px;top:299.03px;width:3.56px;height:1.75px;background:#7b7b72;opacity:.6"></div>
<div class="a" style="left:1842.27px;top:299.03px;width:11.29px;height:1.75px;background:#7b7b72;opacity:.6"></div>
<div class="a" style="left:1772.75px;top:301.60px;width:6.14px;height:1.75px;background:#a9dc2d;opacity:.6"></div>
<div class="a" style="left:1779.19px;top:301.60px;width:0.99px;height:1.75px;background:#179fff;opacity:.6"></div>
<div class="a" style="left:1780.47px;top:301.60px;width:11.29px;height:1.75px;background:#f4f4ee;opacity:.6"></div>
<div class="a" style="left:1792.06px;top:301.60px;width:0.99px;height:1.75px;background:#179fff;opacity:.6"></div>
<div class="a" style="left:1793.35px;top:301.60px;width:0.99px;height:1.75px;background:#f4f4ee;opacity:.6"></div>
<div class="a" style="left:1772.75px;top:304.18px;width:6.14px;height:1.75px;background:#a9dc2d;opacity:.6"></div>
<div class="a" style="left:1779.19px;top:304.18px;width:0.99px;height:1.75px;background:#179fff;opacity:.6"></div>
<div class="a" style="left:1780.47px;top:304.18px;width:2.28px;height:1.75px;background:#e4d274;opacity:.6"></div>
<div class="a" style="left:1783.05px;top:304.18px;width:0.99px;height:1.75px;background:#179fff;opacity:.6"></div>
<div class="a" style="left:1784.34px;top:304.18px;width:0.99px;height:1.75px;background:#f4f4ee;opacity:.6"></div>
<div class="a" style="left:1772.75px;top:306.75px;width:12.57px;height:1.75px;background:#a9dc2d;opacity:.6"></div>
<div class="a" style="left:1785.62px;top:306.75px;width:0.99px;height:1.75px;background:#179fff;opacity:.6"></div>
<div class="a" style="left:1786.91px;top:306.75px;width:11.29px;height:1.75px;background:#f4f4ee;opacity:.6"></div>
<div class="a" style="left:1798.50px;top:306.75px;width:0.99px;height:1.75px;background:#179fff;opacity:.6"></div>
<div class="a" style="left:1799.79px;top:306.75px;width:0.99px;height:1.75px;background:#f4f4ee;opacity:.6"></div>
<div class="a" style="left:1770.17px;top:309.33px;width:0.99px;height:1.75px;background:#da70d6;opacity:.6"></div>
<div class="a" style="left:1767.60px;top:311.90px;width:0.99px;height:1.75px;background:#ffd700;opacity:.6"></div>
<div class="a" style="left:0;top:1180px;width:2000px;height:124px;background:#1b1e25"></div>
<div class="a" style="left:86.10px;top:61.50px;width:18.4px;height:18.4px;border-radius:50%;background:#fe5f57"></div>
<div class="a" style="left:115.80px;top:61.50px;width:18.4px;height:18.4px;border-radius:50%;background:#f8c309"></div>
<div class="a" style="left:145.50px;top:61.50px;width:18.4px;height:18.4px;border-radius:50%;background:#33c650"></div>
<svg style="left:0;top:0" width="1" height="1"><g fill="none" stroke="#84878e" stroke-width="1.5" stroke-linecap="round" stroke-linejoin="round"><path d="M612 70.8 H626.5 M617.8 65 L612 70.8 L617.8 76.6"/><path d="M645.5 70.8 H660 M654.2 65 L660 70.8 L654.2 76.6"/></g></svg>
<div class="a" style="left:680.3px;top:55.6px;width:706.6px;height:30px;border-radius:7px;background:#24272e;border:1.5px solid #44474e;box-sizing:border-box"></div>
<svg style="left:0;top:0" width="1" height="1"><g fill="none" stroke="#c9cacc" stroke-width="1.5" stroke-linecap="round"><circle cx="789.5" cy="69.2" r="5.9"/><path d="M793.8 73.5 L797.8 77.5"/></g></svg>
<div class="a ui" style="left:807px;top:60.8px;height:22px;line-height:22px;font-size:15.9px;letter-spacing:0.3px;color:#d0d1d3">~/Projects/100_days_of_flutter/clipflow/bin/clipflow.dart — clipflow</div>
<svg style="left:0;top:0" width="1" height="1"><g fill="none" stroke="#cfd0d2" stroke-width="1.5"><rect x="1789.3" y="62.5" width="5.8" height="16.5" rx="1.6"/><rect x="1799" y="62.5" width="7" height="6.8" rx="1.6"/><rect x="1799" y="72.2" width="7" height="6.8" rx="1.6"/><rect x="1822.8" y="62.5" width="17" height="16.5" rx="2.4"/><rect x="1856.3" y="62.5" width="17" height="16.5" rx="2.4"/><path d="M1856.8 74.5 H1873.3"/><rect x="1889.8" y="62.5" width="17" height="16.5" rx="2.4"/><path d="M1901 62.8 V78.7"/></g><path d="M1823.5 63.3 H1830.5 V78.3 H1823.5 Z" fill="#cfd0d2"/><path d="M1857 75 H1873 V77 Q1873 78.5 1871.5 78.5 H1858.5 Q1857 78.5 1857 77 Z" fill="#cfd0d2" opacity=".6"/></svg>
<svg style="left:0;top:0" width="1" height="1"><g fill="none" stroke="#cfd0d2" stroke-width="1.4" stroke-linejoin="round" stroke-linecap="round"><g transform="translate(1808 109.7) scale(0.717) translate(-94.4 -299.7)" stroke-width="2.1"><path d="M94.4 308 V302 Q94.4 299.4 96.6 300.6 L112.8 309 Q114.5 310.1 112.8 311.2 L104.3 316.6"/><path d="M92.9 315.3 Q92.9 311.3 95.5 311.3 Q98.1 311.3 98.1 315.3"/><path d="M91.3 315.3 H99.9 V320.5 Q99.9 325.1 95.6 325.1 Q91.3 325.1 91.3 320.5 Z"/><path d="M91.3 316.5 L88.3 313.5 M99.9 316.5 L102.9 313.5 M91.3 319.3 H88.1 M99.9 319.3 H103.1 M91.8 323 L88.3 325.7 M99.4 323 L102.9 325.7"/></g><path d="M1830.5 115.5 L1834.5 119.2 L1838.5 115.5"/><rect x="1856.3" y="108.5" width="17" height="16.5" rx="2.4"/><path d="M1864.8 108.8 V124.7"/></g><g fill="#cfd0d2"><circle cx="1892.2" cy="116.8" r="1.3"/><circle cx="1898" cy="116.8" r="1.3"/><circle cx="1903.8" cy="116.8" r="1.3"/></g></svg>
<div class="a ui" style="left:533.5px;top:105.8px;height:24px;line-height:24px;font-size:17.3px;font-style:italic;letter-spacing:0.38px;color:#e6e6e6">clipflow.dart</div>
<svg style="left:0;top:0" width="1" height="1"><g stroke="#d6d6d6" stroke-width="1.5" stroke-linecap="round"><path d="M651 111.5 L661 121.5 M661 111.5 L651 121.5"/></g></svg>
<div class="a ui" style="left:541.5px;top:143.6px;height:22px;line-height:22px;font-size:17.1px;letter-spacing:0.2px;color:#9297a5">bin</div>
<div class="a ui" style="left:586px;top:143.6px;height:22px;line-height:22px;font-size:17.1px;letter-spacing:0.4px;color:#9297a5">clipflow.dart</div>
<div class="a ui" style="left:702px;top:143.6px;height:22px;line-height:22px;font-size:17.1px;color:#9297a5">...</div>
<svg style="left:0;top:0" width="1" height="1"><g fill="none" stroke="#9297a5" stroke-width="1.3" stroke-linecap="round" stroke-linejoin="round"><path d="M573.2 148.3 L578.2 153.8 L573.2 159.3"/><path d="M689.2 148.3 L694.2 153.8 L689.2 159.3"/></g></svg>
<svg style="left:0;top:0" width="1" height="1"><g fill="none" stroke-linecap="round" stroke-linejoin="round"><g stroke="#ececec" stroke-width="2.2"><path d="M96 110.5 H105.5 L113.5 118.5 V133.5 Q113.5 135.5 111.5 135.5 H97 Q95 135.5 95 133.5 V112.5 Q95 110.5 97 110.5"/><path d="M105.5 110.5 V116.5 Q105.5 118.5 107.5 118.5 H113.5"/><path d="M93 113.8 Q90.5 114.6 90.5 117.5 V135 Q90.5 139.5 95 139.5 H109.5"/></g><g stroke="#7e838f" stroke-width="2"><circle cx="100.1" cy="183.6" r="9.1"/><path d="M106.6 190.3 L115.6 199.3"/></g><g stroke="#7e838f" stroke-width="2"><circle cx="96.5" cy="237.5" r="3.6"/><circle cx="96.5" cy="259" r="3.6"/><circle cx="109.9" cy="243.3" r="3.6"/><path d="M96.5 241.1 V255.4"/><path d="M109.9 246.9 Q109.9 251.5 104 251.5 H96.5"/></g><g stroke="#7e838f" stroke-width="2.1"><path d="M94.4 308 V302 Q94.4 299.4 96.6 300.6 L112.8 309 Q114.5 310.1 112.8 311.2 L104.3 316.6"/><path d="M92.9 315.3 Q92.9 311.3 95.5 311.3 Q98.1 311.3 98.1 315.3"/><path d="M91.3 315.3 H99.9 V320.5 Q99.9 325.1 95.6 325.1 Q91.3 325.1 91.3 320.5 Z"/><path d="M91.3 316.5 L88.3 313.5 M99.9 316.5 L102.9 313.5 M91.3 319.3 H88.1 M99.9 319.3 H103.1 M91.8 323 L88.3 325.7 M99.4 323 L102.9 325.7"/></g><g stroke="#7e838f" stroke-width="2.1"><path d="M90.6 373.2 V364.2 Q90.6 361.7 93.1 361.7 H99.3 Q101.8 361.7 101.8 364.2 V384.8"/><path d="M90.6 373.2 V382.3 Q90.6 384.8 93.1 384.8 H111.3 Q113.8 384.8 113.8 382.3 V375.7 Q113.8 373.2 111.3 373.2 H90.6"/><path d="M109 359.8 L115.4 366.4 L109 372.8 L102.8 366.4 Z"/></g><g stroke="#7e838f" stroke-width="2.1"><path d="M94.9 421.5 H111.6 M98.3 421.5 V431 Q98.3 432.5 97.6 434 L92.3 444 Q91.5 446.8 94.5 446.8 H111.7 Q114.7 446.8 113.9 444 L108.6 434 Q107.9 432.5 107.9 431 V421.5 M95.5 439 H110.7"/></g><g stroke="#7e838f" stroke-width="2"><circle cx="103.1" cy="496" r="14.8"/><path d="M100.5 488 V503 M100.5 488 L108.4 496.7"/></g><g fill="#7e838f"><circle cx="100.5" cy="488.2" r="2.7"/><circle cx="108.4" cy="496.7" r="2.7"/><circle cx="100.5" cy="503.2" r="2.7"/></g><g stroke="#7e838f" stroke-width="2"><path d="M104 570.5 H93 Q91.5 570.5 91.5 569 V545 Q91.5 543.5 93 543.5 H106 L113.5 551 V556"/><path d="M106 543.5 V551 H113.5"/><path d="M102 551.5 Q96.5 550.5 96.5 556 Q96.5 561.5 102 560.5"/><path d="M101.5 556 H105.5 M103.5 554 V558 M107 556 H111 M109 554 V558" stroke-width="1.4"/></g><g transform="translate(111.4 566.3)"><circle r="4.2" fill="none" stroke="#7e838f" stroke-width="3.2"/><g stroke="#7e838f" stroke-width="2.4"><path d="M0 -7.5 V7.5 M-7.5 0 H7.5 M-5.3 -5.3 L5.3 5.3 M5.3 -5.3 L-5.3 5.3"/></g><circle r="2.2" fill="#1b1e25"/></g><g stroke="#7e838f" stroke-width="2"><circle cx="103" cy="1087.5" r="12.8"/></g><g fill="#7e838f"><circle cx="103" cy="1082.5" r="3.6"/><path d="M95.5 1089.5 H110.5 Q110.5 1095 103 1095 Q95.5 1095 95.5 1089.5 Z"/></g></g></svg>
<svg style="left:0;top:0" width="1" height="1"><path d="M100.77 1140.31 L101.22 1137.15 L104.98 1137.15 L105.43 1140.31 L107.60 1141.21 L110.15 1139.29 L112.81 1141.95 L110.89 1144.50 L111.79 1146.67 L114.95 1147.12 L114.95 1150.88 L111.79 1151.33 L110.89 1153.50 L112.81 1156.05 L110.15 1158.71 L107.60 1156.79 L105.43 1157.69 L104.98 1160.85 L101.22 1160.85 L100.77 1157.69 L98.60 1156.79 L96.05 1158.71 L93.39 1156.05 L95.31 1153.50 L94.41 1151.33 L91.25 1150.88 L91.25 1147.12 L94.41 1146.67 L95.31 1144.50 L93.39 1141.95 L96.05 1139.29 L98.60 1141.21 Z" fill="none" stroke="#7e838f" stroke-width="1.9" stroke-linejoin="round"/><circle cx="103.1" cy="1149" r="3.6" fill="none" stroke="#7e838f" stroke-width="1.9"/></svg>
<div class="a" style="left:102.2px;top:1148.1px;width:23px;height:23px;border-radius:50%;background:#7fa8da;border:1.3px solid #1b1e25;box-sizing:border-box"></div>
<div class="a ui" style="left:102.2px;top:1148.6px;width:23px;height:23px;line-height:23px;text-align:center;font-size:14.5px;font-weight:bold;color:#1b1e25">1</div>
<div class="a ui" style="left:160px;top:107px;height:20px;line-height:20px;font-size:14.6px;letter-spacing:-0.5px;color:#cfd0d2">CLIPFLOW</div>
<svg style="left:0;top:0" width="1" height="1"><g fill="none" stroke="#c4c5c8" stroke-width="1.4" stroke-linejoin="round" stroke-linecap="round"><path d="M355 125.3 H351.3 Q349.6 125.3 349.6 123.6 V109.4 Q349.6 107.7 351.3 107.7 H357.3 L362 112.6 V114"/><path d="M357.3 107.9 V112.6 H361.8"/><circle cx="360" cy="120.8" r="6.2" fill="#d4d4d6" stroke="#22262e" stroke-width="1.2"/><path d="M360 117.6 V124 M356.8 120.8 H363.2" stroke="#22262e" stroke-width="1.5"/><path d="M387.6 124.2 H382 Q380.2 124.2 380.2 122.4 V111.6 Q380.2 109.8 382 109.8 H385.5 Q387.5 109.8 388.5 111.4 Q389.3 112.8 391 112.8 H396.4 Q398.2 112.8 398.2 114.6 V115"/><circle cx="393.6" cy="120.8" r="6.2" fill="#d4d4d6" stroke="#22262e" stroke-width="1.2"/><path d="M393.6 117.6 V124 M390.4 120.8 H396.8" stroke="#22262e" stroke-width="1.5"/><path d="M428.6 112.2 A7 7 0 1 0 430 117.5"/><path d="M429.4 108.8 V112.8 H425.4"/><rect x="447.6" y="108.2" width="15" height="14.6" rx="2.6"/><rect x="449.2" y="109.8" width="11.8" height="11.4" rx="1.4" stroke-width="0.9"/><path d="M451.8 115.4 H458.4"/><path d="M465 111.5 V122.5 Q465 125.5 462 125.5 H450.5"/></g><g fill="#c4c5c8"><circle cx="484.6" cy="116.5" r="1.4"/><circle cx="489.6" cy="116.5" r="1.4"/><circle cx="494.6" cy="116.5" r="1.4"/></g></svg>
<div class="a" style="left:134px;top:195.8px;width:385px;height:28.2px;background:#3d404d;border:1.4px solid #0f86e8;box-sizing:border-box"></div>
<div class="a" style="left:149.3px;top:195.8px;width:1.6px;height:28.2px;background:#5a5b60"></div>
<div class="a ui" style="left:172.5px;top:139.50px;height:28px;line-height:28px;font-size:16.9px;letter-spacing:0.61px;color:#c6c9d0">.dart_tool</div>
<div class="a ui" style="left:173.5px;top:169.03px;height:28px;line-height:28px;font-size:16.9px;letter-spacing:0.00px;color:#c6c9d0">bin</div>
<div class="a ui" style="left:183.0px;top:196.56px;height:28px;line-height:28px;font-size:16.9px;letter-spacing:0.46px;color:#e8e8e8">clipflow.dart</div>
<div class="a ui" style="left:172.5px;top:225.09px;height:28px;line-height:28px;font-size:16.9px;letter-spacing:0.48px;color:#c6c9d0">.gitignore</div>
<div class="a ui" style="left:172.5px;top:253.62px;height:28px;line-height:28px;font-size:16.9px;letter-spacing:0.21px;color:#c6c9d0">analysis_options.yaml</div>
<div class="a ui" style="left:172.5px;top:282.15px;height:28px;line-height:28px;font-size:16.9px;letter-spacing:-0.20px;color:#c6c9d0">CHANGELOG.md</div>
<div class="a ui" style="left:172.5px;top:310.68px;height:28px;line-height:28px;font-size:16.9px;letter-spacing:0.48px;color:#c6c9d0">pubspec.lock</div>
<div class="a ui" style="left:172.5px;top:339.21px;height:28px;line-height:28px;font-size:16.9px;letter-spacing:0.24px;color:#c6c9d0">pubspec.yaml</div>
<div class="a ui" style="left:172.5px;top:367.74px;height:28px;line-height:28px;font-size:16.9px;letter-spacing:-0.31px;color:#c6c9d0">README.md</div>
<svg style="left:0;top:0" width="1" height="1"><path d="M145.7 148 Q145.7 146.8 146.9 146.8 H151.5 L153.5 148.8 H162.6 Q163.8 148.8 163.8 150 V158.3 Q163.8 159.5 162.6 159.5 H146.9 Q145.7 159.5 145.7 158.3 Z" fill="#2f9bf0"/><path d="M152.2 157 L155.4 151.4 H161.8 L165 157 L161.8 162.6 H155.4 Z" fill="#22262e"/><path d="M153.4 157 L156 152.5 H161.2 L163.8 157 L161.2 161.5 H156 Z" fill="#c2e0fb"/><path d="M145.7 176.5 Q145.7 175.2 147 175.2 H151.5 L153.5 177.2 H161.5 Q162.8 177.2 162.8 178.5 V180 H151 Q149.5 180 149 181.5 L147 187.9 H147 Q145.7 187.9 145.7 186.6 Z" fill="#e8706e"/><path d="M148.5 187.9 L150.5 181.2 H155 L153 187.9 Z" fill="#e8706e"/><rect x="151.5" y="179" width="14" height="10.8" rx="1.6" fill="#22262e"/><rect x="152.3" y="180" width="12.5" height="9.3" rx="1.2" fill="#fdcdd0"/><path d="M156 180 V178.8 Q156 178 156.8 178 H160.3 Q161.1 178 161.1 178.8 V180" fill="none" stroke="#fdcdd0" stroke-width="1.2"/><path d="M155.8 210.2 L159.5 205 L165.4 200.7 L169.5 204.8 L174 209.5 V215.5 L171 218.8 H163.1 L158.5 214 Z" fill="#0b5aa6"/><path d="M159.5 205 L165.4 200.7 L169.3 205 Z" fill="#45c3f5"/><path d="M159.5 205 L172.3 218.8 H163.1 L158.6 214 L157.6 208.5 Z" fill="#62b3f2"/><g transform="translate(154.8 238.2) rotate(45)"><rect x="-7.2" y="-7.2" width="14.4" height="14.4" rx="2.6" fill="#f2521e"/></g><g stroke="#1d2730" stroke-width="1.5" fill="none" stroke-linecap="round"><path d="M151.6 230.6 L155.2 234.3 V243 M156.6 237.6 V239 L158.7 239.2"/></g><g fill="#1d2730"><circle cx="155.2" cy="243.1" r="1.9"/><circle cx="158.9" cy="239.2" r="1.9"/></g>
<svg style="left:0;top:0" width="1" height="1"><g transform="translate(0 0.00)"><path d="M149.3 258 H156.8 L161.6 263 V273.7 Q161.6 275.2 160.1 275.2 H149.3 Q147.8 275.2 147.8 273.7 V259.5 Q147.8 258 149.3 258 Z" fill="#f25454"/><path d="M155.4 260.2 V263.6 H159.6 Z" fill="#1d2730"/><g stroke="#1d2730" stroke-width="1.4" stroke-linecap="round"><path d="M150.3 267.6 H155.6 M152.6 271 H159.4"/></g></g><g transform="translate(0 85.20)"><path d="M149.3 258 H156.8 L161.6 263 V273.7 Q161.6 275.2 160.1 275.2 H149.3 Q147.8 275.2 147.8 273.7 V259.5 Q147.8 258 149.3 258 Z" fill="#f25454"/><path d="M155.4 260.2 V263.6 H159.6 Z" fill="#1d2730"/><g stroke="#1d2730" stroke-width="1.4" stroke-linecap="round"><path d="M150.3 267.6 H155.6 M152.6 271 H159.4"/></g></g><g fill="none" stroke="#8ac249" stroke-width="1.9" stroke-linecap="round"><path d="M148.3 298.2 A7.6 7.6 0 1 0 149.8 290.2"/><path d="M154.7 291 V295.5 L157.8 297.8"/></g><path d="M144.8 294.8 H151.8 L148.3 299.2 Z" fill="#8ac249"/><path d="M150.8 320 V317.8 Q150.8 314.2 154.4 314.2 Q158 314.2 158 317.8 V320" fill="none" stroke="#fbd552" stroke-width="2"/><rect x="147.8" y="319.6" width="13.4" height="12.6" rx="1.2" fill="#fbd552"/><circle cx="154.5" cy="325.6" r="2.2" fill="#22262e"/><circle cx="154.6" cy="380.2" r="8.9" fill="#42a3f2"/><rect x="153.5" y="378.2" width="2.4" height="6.8" fill="#22262e"/><circle cx="154.7" cy="375.4" r="1.35" fill="#22262e"/></svg>
<svg style="left:0;top:0" width="1" height="1"><g fill="none" stroke="#babec8" stroke-width="1.5" stroke-linecap="round" stroke-linejoin="round"><path d="M86.2 1191 L92.3 1196.6 L86.2 1202.3 M98.8 1186.8 L93.8 1192.6 L98.8 1198.4"/><circle cx="134" cy="1195" r="8.3"/><path d="M130.8 1191.8 L137.2 1198.2 M137.2 1191.8 L130.8 1198.2"/><path d="M173 1186.2 L181.3 1201.3 H164.7 Z"/><path d="M173 1191.5 V1196" /><circle cx="173" cy="1198.6" r="0.3"/><rect x="1759.3" y="1187.5" width="6.6" height="6.6" rx="2.4"/><rect x="1767.3" y="1187.5" width="6.6" height="6.6" rx="2.4"/><path d="M1756.5 1197.5 Q1756.5 1194.5 1759.5 1194.5 H1773.5 Q1776.5 1194.5 1776.5 1197.5 V1199 Q1776.5 1203.2 1766.5 1203.2 Q1756.5 1203.2 1756.5 1199 Z" fill="#babec8" stroke="none"/><path d="M1763.3 1196.8 V1199.6 M1769.7 1196.8 V1199.6" stroke="#1b1e25" stroke-width="1.6"/><path d="M1757.8 1186.4 L1775.6 1203.8" stroke="#1b1e25" stroke-width="3.2"/><path d="M1757.8 1186.4 L1775.6 1203.8"/><circle cx="1807" cy="1195" r="8.2"/><path d="M1801.3 1200.7 L1812.7 1189.3"/><path d="M1900.5 1200.5 H1913.5 L1912.2 1198.5 V1192 Q1912.2 1186.5 1907 1186.5 Q1901.8 1186.5 1901.8 1192 V1198.5 Z"/><path d="M1905.5 1202.2 Q1907 1204 1908.5 1202.2"/></g></svg>
<div class="a ui" style="left:148.5px;top:1183px;height:24px;line-height:24px;font-size:16.1px;color:#babec8">0</div>
<div class="a ui" style="left:187.5px;top:1183px;height:24px;line-height:24px;font-size:16.1px;color:#babec8">0</div>
<div class="a ui" style="left:1377.0px;top:1183px;height:24px;line-height:24px;font-size:16.1px;color:#babec8">Ln 1, Col 1</div>
<div class="a ui" style="left:1477.0px;top:1183px;height:24px;line-height:24px;font-size:16.1px;color:#babec8">Spaces: 2</div>
<div class="a ui" style="left:1569.5px;top:1183px;height:24px;line-height:24px;font-size:16.1px;color:#babec8">UTF-8</div>
<div class="a ui" style="left:1637.0px;top:1183px;height:24px;line-height:24px;font-size:16.1px;color:#babec8">LF</div>
<div class="a ui" style="left:1676.0px;top:1183px;height:24px;line-height:24px;font-size:16.1px;color:#babec8">{ }</div>
<div class="a ui" style="left:1703.0px;top:1183px;height:24px;line-height:24px;font-size:16.1px;color:#babec8">Dart</div>
<div class="a ui" style="left:1822.0px;top:1183px;height:24px;line-height:24px;font-size:16.1px;color:#babec8">Prettier</div>
</div><div class="a" style="left:72px;top:49px;width:1856px;height:1160px;border-radius:22px;border-style:solid;border-width:1.5px 2px 2px 2.4px;border-color:#6a6b6f #4c4d4f #404146 #46484c;box-sizing:border-box"></div><div class="a" style="left:72px;top:94px;width:3px;height:62px;background:#ebebeb"></div></body></html>
